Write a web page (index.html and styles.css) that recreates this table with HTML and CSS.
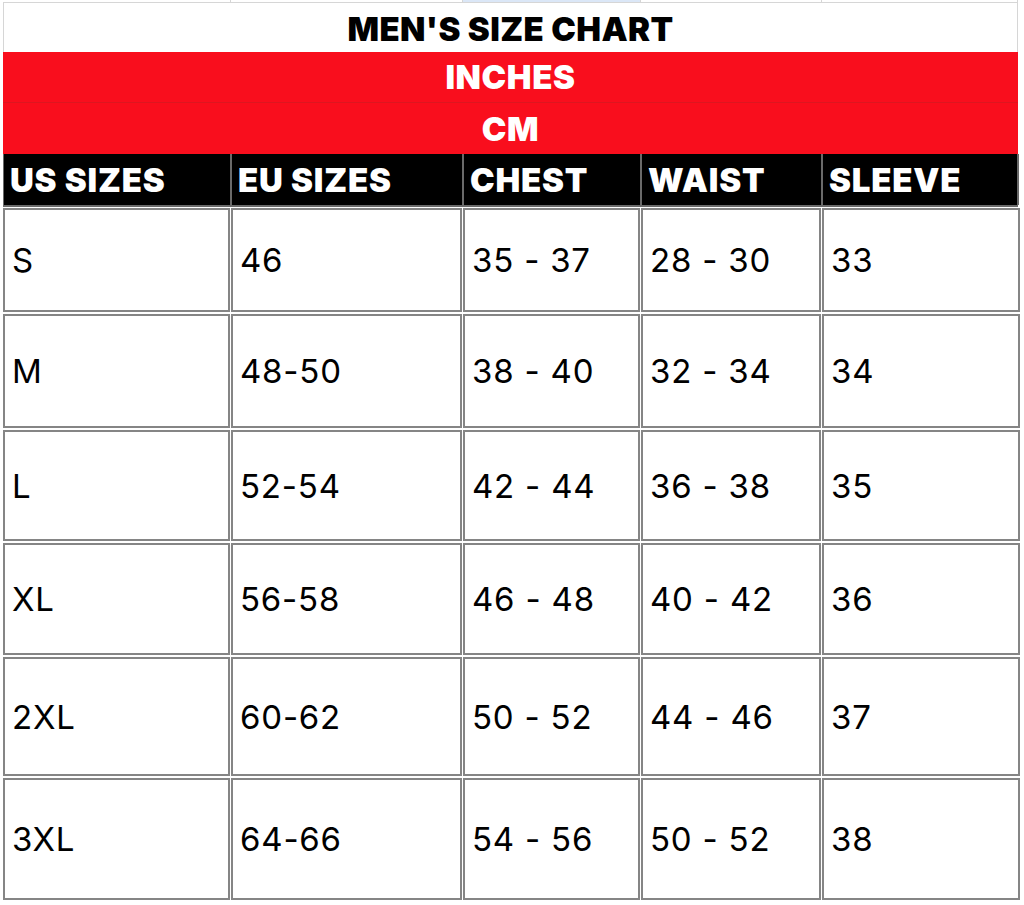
FILE: index.html
```html
<!DOCTYPE html>
<html>
<head>
<meta charset="utf-8">
<link rel="stylesheet" href="styles.css">
</head>
<body>
<div class="sheet">
  <div class="strip">
    <div class="sc"></div><div class="sc"></div><div class="sc sel"></div><div class="sc"></div><div class="sc"></div>
  </div>
  <div class="title">MEN'S SIZE CHART</div>
  <div class="band band-top">INCHES</div>
  <div class="band">CM</div>
  <div class="head cols">
    <div class="hc">US SIZES</div>
    <div class="hc">EU SIZES</div>
    <div class="hc">CHEST</div>
    <div class="hc">WAIST</div>
    <div class="hc">SLEEVE</div>
  </div>
  <div class="data cols">
    <div class="dc">S</div><div class="dc">46</div><div class="dc">35 - 37</div><div class="dc">28 - 30</div><div class="dc">33</div>
    <div class="dc">M</div><div class="dc">48-50</div><div class="dc">38 - 40</div><div class="dc">32 - 34</div><div class="dc">34</div>
    <div class="dc">L</div><div class="dc">52-54</div><div class="dc">42 - 44</div><div class="dc">36 - 38</div><div class="dc">35</div>
    <div class="dc">XL</div><div class="dc">56-58</div><div class="dc">46 - 48</div><div class="dc">40 - 42</div><div class="dc">36</div>
    <div class="dc">2XL</div><div class="dc">60-62</div><div class="dc">50 - 52</div><div class="dc">44 - 46</div><div class="dc">37</div>
    <div class="dc">3XL</div><div class="dc">64-66</div><div class="dc">54 - 56</div><div class="dc">50 - 52</div><div class="dc">38</div>
  </div>
</div>
</body>
</html>
```
FILE: styles.css
```css
html, body {
  margin: 0;
  padding: 0;
  background: #ffffff;
}
body {
  font-family: "Inter", "Roboto", "Liberation Sans", sans-serif;
  color: #000;
}
.sheet {
  width: 1024px;
  height: 905px;
  overflow: hidden;
  padding-left: 3px;
  box-sizing: border-box;
}
.strip {
  display: grid;
  grid-template-columns: 228px 232px 178px 181px 196px;
  height: 2px;
  border-bottom: 1px solid #d6d6d6;
  width: 1015px;
}
.sc {
  border-right: 1px solid #d6d6d6;
}
.sc.sel {
  background: #dbe7f7;
}
.title {
  width: 1015px;
  height: 49px;
  box-sizing: border-box;
  border-left: 1px solid #d6d6d6;
  border-right: 1px solid #d6d6d6;
  display: flex;
  align-items: center;
  justify-content: center;
  font-weight: 900;
  font-size: 33px;
  letter-spacing: 0.4px;
  padding-top: 2px;
}
.band {
  width: 1015px;
  height: 51px;
  box-sizing: border-box;
  background: #f90e1d;
  color: #ffffff;
  display: flex;
  align-items: center;
  justify-content: center;
  font-weight: 900;
  font-size: 33px;
  letter-spacing: 0.6px;
}
.band-top {
  border-bottom: 1px solid #dd1620;
}
.cols {
  display: grid;
  grid-template-columns: 228px 232px 178px 181px 196px;
  width: 1015px;
}
.head {
  height: 53px;
  background: #000;
  box-sizing: border-box;
  border-left: 1px solid #6a6a6a;
  border-bottom: 2px solid #6a6a6a;
}
.hc {
  color: #fff;
  font-weight: 900;
  font-size: 33px;
  display: flex;
  align-items: center;
  padding-left: 6px;
  border-right: 2px solid #6a6a6a;
  letter-spacing: 0.8px;
}
.data {
  width: 1018px;
  grid-template-columns: 227px 231px 177px 180px 198px;
  grid-template-rows: 104px 114px 111px 112px 119px 122px;
  gap: 2px 1px;
  margin-top: 1px;
}
.dc {
  border: 2px solid #858585;
  display: flex;
  align-items: center;
  padding-left: 7px;
  font-size: 33px;
  font-weight: 400;
  letter-spacing: 0.8px;
}
```
